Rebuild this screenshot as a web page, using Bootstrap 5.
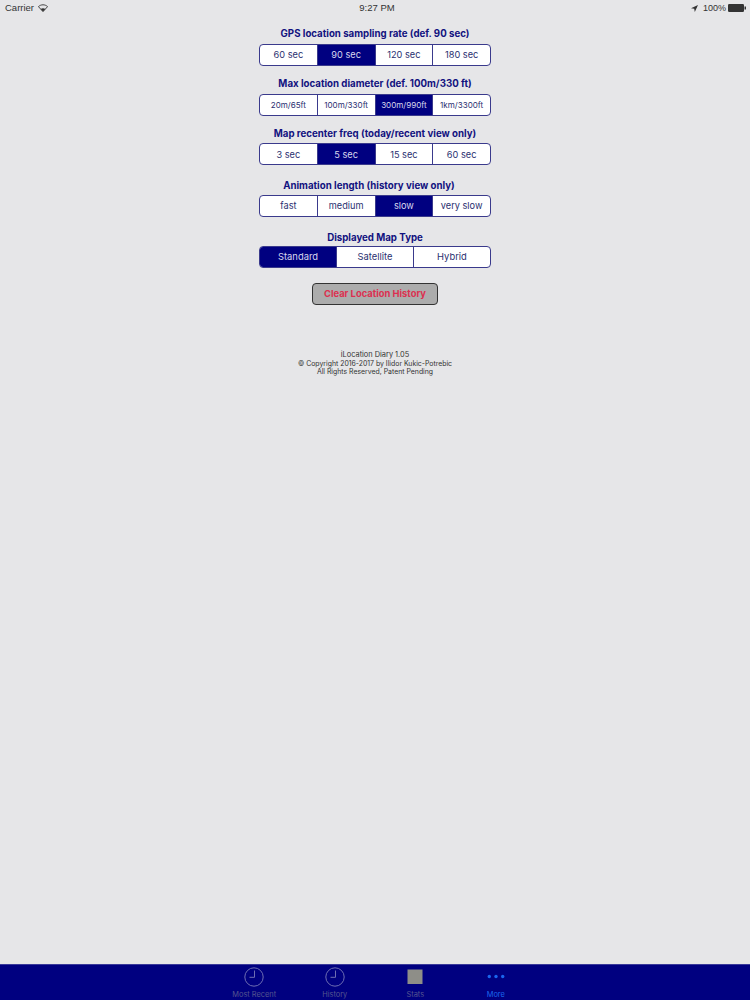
<!DOCTYPE html>
<html lang="en">
<head>
<meta charset="utf-8">
<title>iLocation Diary</title>
<link href="https://cdn.jsdelivr.net/npm/bootstrap@5.3.0/dist/css/bootstrap.min.css" rel="stylesheet">
<style>
html,body{height:1000px;overflow:hidden}
body{background:#e6e6e8;font-family:Inter,"Liberation Sans",sans-serif;color:#000080}
.app-page{height:1000px}
.status-row{height:16px;padding:0 4px 0 5px;font-size:9.5px;color:#333;font-family:"Liberation Sans",sans-serif;position:relative}
.status-time{position:absolute;left:4px;right:0;top:0;text-align:center;line-height:16px;font-size:9.5px}
.status-pct{font-size:9px;padding-top:1px;margin-left:5px;margin-right:2px}
.setting-col{width:232px;margin:0 auto}
.set-title{font-size:9.7px;font-weight:700;line-height:14px;white-space:nowrap;color:#12127f}
.title-off{padding-right:12px}
.seg-row{height:22px;border:1px solid #3a3a8c;border-radius:4px;background:#fff;overflow:hidden;margin-top:2.5px}
.seg-item{flex:1 1 0;min-width:0;font-size:9.2px;color:#2a3070;border-left:1px solid #3a3a8c;white-space:nowrap}
.seg-item:first-child{border-left:0}
.seg-item.on{background:#000080;color:#d8d8ee}
.seg-tiny .seg-item{font-size:8.05px}
.seg-wide{margin-top:1.5px}
.seg-wide .seg-item{font-size:9.4px}
.blk1{margin-top:11.3px}.blk2{margin-top:11.7px}.blk3{margin-top:11px}.blk4{margin-top:13.2px}.blk5{margin-top:13.7px}
.btn.clear-btn{display:block;width:126px;height:22px;margin:15px auto 0;padding:0;background:#acacac;border:1px solid #333;border-radius:4px;color:#dc3050;font-size:9.4px;font-weight:700;line-height:20px;text-align:center}
.about-box{margin-top:46px;font-size:6.9px;line-height:8.3px;color:#333}
.about-name{font-size:7.4px}
.tab-strip{position:absolute;left:0;right:0;top:964px;height:36px;background:#000080;border-top:1px solid #3a3a9a}
.tab-set{width:322px;margin:0 auto;height:100%}
.tab-cell{flex:1 1 0;font-size:7.4px;color:#55558f;padding-top:2px}
.tab-cell svg{display:block;height:20px;width:22px}
.tab-label{margin-top:3px;line-height:9px;white-space:nowrap}
.tab-cell.active{color:#1a66ee}
</style>
</head>
<body>
<div class="app-page position-relative">
  <div class="status-row d-flex align-items-center justify-content-between">
    <div class="d-flex align-items-center gap-1"><span>Carrier</span>
      <svg width="10" height="8" viewBox="0 0 10 8"><path d="M5 7.6 0.4 2.6C3 .2 7 .2 9.6 2.6Z" fill="none" stroke="#333" stroke-width=".9"/><path d="M5 7.6 2.7 5C4 3.9 6 3.9 7.3 5Z" fill="#333"/></svg>
    </div>
    <div class="status-time">9:27 PM</div>
    <div class="d-flex align-items-center">
      <svg width="7" height="7" viewBox="0 0 7 7"><path d="M7 0 0 3.2 3.2 3.8 3.8 7Z" fill="#333"/></svg>
      <span class="status-pct">100%</span>
      <svg width="18" height="8" viewBox="0 0 18 8"><rect x="0" y="0" width="16" height="8" rx="1.2" fill="#333"/><rect x="16.5" y="2.5" width="1.5" height="3" fill="#333"/></svg>
    </div>
  </div>

  <div class="setting-col">
    <div class="blk1">
      <div class="set-title text-center">GPS location sampling rate (def. 90 sec)</div>
      <div class="seg-row d-flex"><div class="seg-item d-flex align-items-center justify-content-center">60 sec</div><div class="seg-item on d-flex align-items-center justify-content-center">90 sec</div><div class="seg-item d-flex align-items-center justify-content-center">120 sec</div><div class="seg-item d-flex align-items-center justify-content-center">180 sec</div></div>
    </div>
    <div class="blk2">
      <div class="set-title text-center">Max location diameter (def. 100m/330 ft)</div>
      <div class="seg-row seg-tiny d-flex"><div class="seg-item d-flex align-items-center justify-content-center">20m/65ft</div><div class="seg-item d-flex align-items-center justify-content-center">100m/330ft</div><div class="seg-item on d-flex align-items-center justify-content-center">300m/990ft</div><div class="seg-item d-flex align-items-center justify-content-center">1km/3300ft</div></div>
    </div>
    <div class="blk3">
      <div class="set-title text-center">Map recenter freq (today/recent view only)</div>
      <div class="seg-row d-flex"><div class="seg-item d-flex align-items-center justify-content-center">3 sec</div><div class="seg-item on d-flex align-items-center justify-content-center">5 sec</div><div class="seg-item d-flex align-items-center justify-content-center">15 sec</div><div class="seg-item d-flex align-items-center justify-content-center">60 sec</div></div>
    </div>
    <div class="blk4">
      <div class="set-title text-center title-off">Animation length (history view only)</div>
      <div class="seg-row d-flex"><div class="seg-item d-flex align-items-center justify-content-center">fast</div><div class="seg-item d-flex align-items-center justify-content-center">medium</div><div class="seg-item on d-flex align-items-center justify-content-center">slow</div><div class="seg-item d-flex align-items-center justify-content-center">very slow</div></div>
    </div>
    <div class="blk5">
      <div class="set-title text-center">Displayed Map Type</div>
      <div class="seg-row seg-wide d-flex"><div class="seg-item on d-flex align-items-center justify-content-center">Standard</div><div class="seg-item d-flex align-items-center justify-content-center">Satellite</div><div class="seg-item d-flex align-items-center justify-content-center">Hybrid</div></div>
    </div>
    <button type="button" class="btn clear-btn">Clear Location History</button>
  </div>

  <div class="about-box text-center">
    <div class="about-name">iLocation Diary 1.05</div>
    <div>© Copyright 2016-2017 by Ilidor Kukic-Potrebic</div>
    <div>All Rights Reserved, Patent Pending</div>
  </div>

  <div class="tab-strip">
    <div class="tab-set d-flex">
      <div class="tab-cell d-flex flex-column align-items-center"><svg viewBox="0 0 22 20"><circle cx="11" cy="10" r="9.2" fill="none" stroke="#7a7ab8" stroke-width=".9"/><path d="M11.5 3.5V10.3H6.5" fill="none" stroke="#7a7ab8" stroke-width=".9"/></svg><div class="tab-label">Most Recent</div></div>
      <div class="tab-cell d-flex flex-column align-items-center"><svg viewBox="0 0 22 20"><circle cx="11" cy="10" r="9.2" fill="none" stroke="#7a7ab8" stroke-width=".9"/><path d="M11.5 3.5V10.3H6.5" fill="none" stroke="#7a7ab8" stroke-width=".9"/></svg><div class="tab-label">History</div></div>
      <div class="tab-cell d-flex flex-column align-items-center"><svg viewBox="0 0 22 20"><rect x="3.5" y="2.5" width="15" height="14.5" fill="#8e8e88"/></svg><div class="tab-label">Stats</div></div>
      <div class="tab-cell active d-flex flex-column align-items-center"><svg viewBox="0 0 22 20"><circle cx="4.3" cy="9.5" r="1.7" fill="#1a66ee"/><circle cx="11" cy="9.5" r="1.7" fill="#1a66ee"/><circle cx="17.7" cy="9.5" r="1.7" fill="#1a66ee"/></svg><div class="tab-label">More</div></div>
    </div>
  </div>
</div>
<script src="https://cdn.jsdelivr.net/npm/bootstrap@5.3.0/dist/js/bootstrap.bundle.min.js"></script>
</body>
</html>
